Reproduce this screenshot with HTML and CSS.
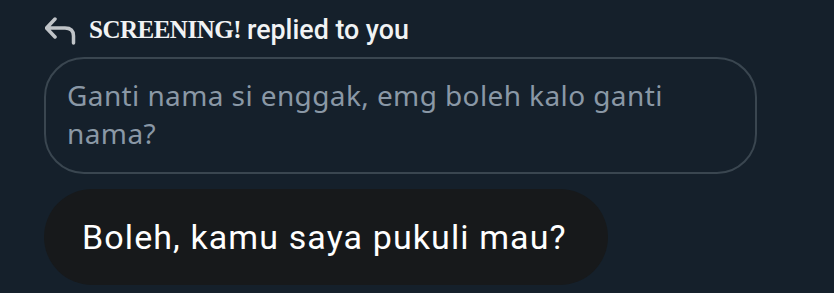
FILE: index.html
```html
<!DOCTYPE html>
<html>
<head>
<meta charset="utf-8">
<link rel="stylesheet" href="styles.css">
</head>
<body>
<div class="page">
  <div class="header">
    <svg class="reply-icon" viewBox="0 0 32 28" width="32" height="28">
      <path d="M10 2 L1.5 11 L10 20 M2 11 H20 Q28.5 11 28.5 19 V26" fill="none" stroke="#c0c4c8" stroke-width="3.5" stroke-linecap="round" stroke-linejoin="round"/>
    </svg>
    <span class="name">SCREENING!</span>
    <span class="action">replied to you</span>
  </div>
  <div class="quote">Ganti nama si enggak, emg boleh kalo ganti nama?</div>
  <div class="bubble">Boleh, kamu saya pukuli mau?</div>
</div>
</body>
</html>
```

FILE: styles.css
```css
html, body {
  margin: 0;
  padding: 0;
  background: #15202b;
}
.page {
  width: 834px;
  height: 293px;
  box-sizing: border-box;
  padding: 15px 0 0 44px;
  display: flex;
  flex-direction: column;
  align-items: flex-start;
}
.header {
  display: flex;
  align-items: center;
  height: 30px;
}
.reply-icon {
  margin-left: 1px;
  margin-right: 12px;
  margin-top: 2px;
}
.name {
  font-family: "Liberation Serif", serif;
  font-weight: bold;
  font-size: 25px;
  line-height: 30px;
  color: #f1f3f4;
  margin-right: 6px;
  letter-spacing: -0.5px;
}
.action {
  font-family: Roboto, sans-serif;
  font-weight: 500;
  font-size: 26.8px;
  line-height: 30px;
  color: #f1f3f4;
}
.quote {
  margin-top: 12px;
  width: 713px;
  box-sizing: border-box;
  border: 2px solid #3a4650;
  border-radius: 40px;
  padding: 17px 60px 20px 21px;
  font-family: "Noto Sans", sans-serif;
  font-size: 28px;
  line-height: 38px;
  letter-spacing: 0.4px;
  color: #8a98a6;
}
.bubble {
  margin-top: 15px;
  background: #17191b;
  border-radius: 48px;
  padding: 28px 41px 28px 38px;
  font-family: Roboto, sans-serif;
  font-size: 34px;
  line-height: 40px;
  letter-spacing: 1.1px;
  color: #ffffff;
}
```
